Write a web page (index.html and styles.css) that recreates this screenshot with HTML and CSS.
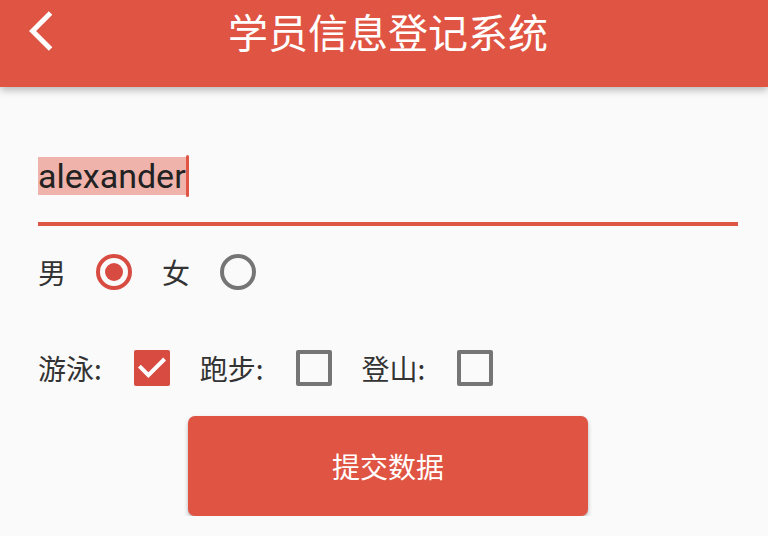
FILE: index.html
```html
<!DOCTYPE html>
<html lang="zh">
<head>
<meta charset="utf-8">
<title>学员信息登记系统</title>
<link rel="stylesheet" href="styles.css">
</head>
<body>
<header class="appbar">
  <svg class="back" viewBox="0 2 12 20" width="24" height="40" aria-hidden="true">
    <path d="M11.67 3.87L9.9 2.1 0 12l9.9 9.9 1.77-1.77L3.54 12z" fill="#fff"/>
  </svg>
  <h1 class="title">学员信息登记系统</h1>
</header>
<main class="content">
  <div class="field">
    <span class="selected">alexander</span><span class="caret"></span>
  </div>
  <div class="radio-row">
    <span class="label">男</span>
    <span class="radio radio-on"><span class="dot"></span></span>
    <span class="label">女</span>
    <span class="radio"></span>
  </div>
  <div class="check-row">
    <span class="label check-label">游泳:</span>
    <span class="checkbox checkbox-on">
      <svg viewBox="0 0 36 36" width="36" height="36" aria-hidden="true">
        <polyline points="5.4,16.2 14.4,25.2 30.6,9" fill="none" stroke="#fff" stroke-width="4"/>
      </svg>
    </span>
    <span class="label check-label">跑步:</span>
    <span class="checkbox"></span>
    <span class="label check-label">登山:</span>
    <span class="checkbox"></span>
  </div>
  <button class="submit" type="button">提交数据</button>
</main>
</body>
</html>
```
FILE: styles.css
```css
* { box-sizing: border-box; }

body {
  margin: 0;
  background: #fafafa;
  font-family: "Noto Sans CJK SC", "Noto Sans", sans-serif;
  color: #333;
}

.appbar {
  height: 87px;
  background: #e05443;
  display: flex;
  align-items: flex-start;
  padding: 11px 45px 0 29px;
  box-shadow: 0 3px 8px rgba(0, 0, 0, 0.28);
}

.back {
  display: block;
  flex: none;
}

.title {
  flex: 1;
  margin: 0;
  text-align: center;
  font-size: 40px;
  line-height: 40px;
  font-weight: 400;
  color: #fff;
}

.content {
  padding: 0 30px 0 38px;
  display: flex;
  flex-direction: column;
}

.field {
  margin-top: 68px;
  display: flex;
  align-items: center;
  padding-bottom: 25px;
  border-bottom: 4px solid #e05443;
}

.selected {
  display: block;
  height: 38px;
  line-height: 38px;
  font-family: Roboto, "Liberation Sans", sans-serif;
  font-size: 34px;
  color: #222;
  background: #efb3ab;
}

.caret {
  display: block;
  width: 3px;
  height: 42px;
  border-radius: 2px;
  background: #e05443;
}

.radio-row {
  margin-top: 28px;
  display: flex;
  align-items: center;
  height: 36px;
}

.label {
  font-size: 28px;
  line-height: 36px;
  color: #333;
}

.radio-row .label { margin-right: 30px; }

.radio {
  width: 36px;
  height: 36px;
  border-radius: 50%;
  border: 4.5px solid #757575;
  margin-right: 30px;
  display: flex;
  align-items: center;
  justify-content: center;
}

.radio-on { border-color: #d84b40; }

.dot {
  width: 18px;
  height: 18px;
  border-radius: 50%;
  background: #d84b40;
}

.check-row {
  margin-top: 60px;
  display: flex;
  align-items: center;
  height: 36px;
}

.check-label { margin-right: 32px; }

.checkbox {
  width: 36px;
  height: 36px;
  border: 4px solid #757575;
  border-radius: 2px;
  margin-right: 30px;
  flex: none;
}

.checkbox-on {
  border: none;
  background: #d84b40;
}

.checkbox svg { display: block; }

.submit {
  align-self: center;
  margin-top: 30px;
  width: 400px;
  height: 100px;
  border: none;
  border-radius: 7px;
  background: #e05443;
  color: #fff;
  font-family: "Noto Sans CJK SC", sans-serif;
  font-size: 28px;
  box-shadow: 0 3px 5px rgba(0, 0, 0, 0.22), 0 1px 2px rgba(0, 0, 0, 0.12);
}
```
